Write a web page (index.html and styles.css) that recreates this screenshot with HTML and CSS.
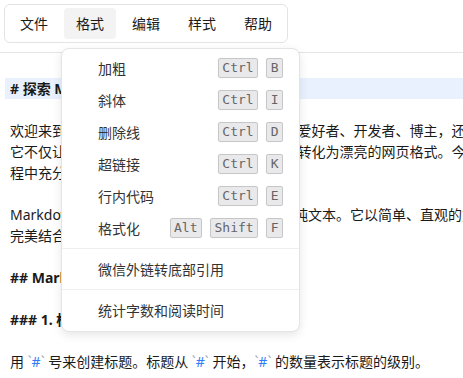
FILE: index.html
```html
<!DOCTYPE html>
<html lang="zh-CN">
<head>
  <meta charset="UTF-8">
  <meta name="viewport" content="width=device-width, initial-scale=1">
  <title>Markdown 编辑器</title>
  <link rel="stylesheet" href="styles.css">
</head>
<body>
  <div class="app">
    <header class="toolbar">
      <nav class="menu-bar">
        <span class="menu-item">文件</span>
        <span class="menu-item active">格式</span>
        <span class="menu-item">编辑</span>
        <span class="menu-item">样式</span>
        <span class="menu-item">帮助</span>
      </nav>
    </header>

    <main class="editor">
      <div class="line bold current"># 探索 Markdown 的奇妙世界</div>
      <div class="line"></div>
      <div class="line">欢迎来到 Markdown 的新世界！无论你是软件爱好者、开发者、博主，还是学生，都能从中受益。</div>
      <div class="line">它不仅让你专注内容，还能将 Markdown 文本转化为漂亮的网页格式。今天，让我们在写作过</div>
      <div class="line">程中充分发挥它的优势。</div>
      <div class="line"></div>
      <div class="line">Markdown 是一种轻量级标记语言，它采用了纯文本。它以简单、直观的方式，将内容与格式</div>
      <div class="line">完美结合在一起。</div>
      <div class="line"></div>
      <div class="line bold">## Markdown 基础语法</div>
      <div class="line"></div>
      <div class="line bold">### 1. 标题</div>
      <div class="line"></div>
      <div class="line">用 <span class="code"><span class="tick">`</span>#<span class="tick">`</span></span> 号来创建标题。标题从 <span class="code"><span class="tick">`</span>#<span class="tick">`</span></span> 开始，<span class="code"><span class="tick">`</span>#<span class="tick">`</span></span> 的数量表示标题的级别。</div>
    </main>

    <div class="dropdown">
      <div class="drop-item"><span>加粗</span><span class="keys"><kbd>Ctrl</kbd><kbd>B</kbd></span></div>
      <div class="drop-item"><span>斜体</span><span class="keys"><kbd>Ctrl</kbd><kbd>I</kbd></span></div>
      <div class="drop-item"><span>删除线</span><span class="keys"><kbd>Ctrl</kbd><kbd>D</kbd></span></div>
      <div class="drop-item"><span>超链接</span><span class="keys"><kbd>Ctrl</kbd><kbd>K</kbd></span></div>
      <div class="drop-item"><span>行内代码</span><span class="keys"><kbd>Ctrl</kbd><kbd>E</kbd></span></div>
      <div class="drop-item"><span>格式化</span><span class="keys"><kbd>Alt</kbd><kbd>Shift</kbd><kbd>F</kbd></span></div>
      <div class="divider"></div>
      <div class="drop-item"><span>微信外链转底部引用</span></div>
      <div class="divider"></div>
      <div class="drop-item"><span>统计字数和阅读时间</span></div>
    </div>
  </div>
</body>
</html>
```

FILE: styles.css
```css
html, body {
  margin: 0;
  padding: 0;
  background: white;
  font-family: "Noto Sans", "Noto Sans CJK SC", sans-serif;
  font-size: 14px;
  color: #1a1a1a;
  overflow: hidden;
}

.app {
  position: relative;
  width: 463px;
  height: 378px;
  overflow: hidden;
}

.toolbar {
  padding: 4px 4px 9px;
  border-bottom: 1px solid #e5e5e5;
}

.menu-bar {
  display: inline-flex;
  gap: 4px;
  padding: 3px;
  border: 1px solid #e3e3e3;
  border-radius: 6px;
}

.menu-item {
  display: flex;
  align-items: center;
  height: 31px;
  padding: 0 12px;
  border-radius: 4px;
  line-height: 1;
}

.menu-item.active {
  background: #f3f3f3;
}

.editor {
  width: 620px;
  padding: 25px 0 0 5px;
}

.line {
  height: 21px;
  line-height: 21px;
  padding-left: 5px;
  white-space: nowrap;
}

.line.bold {
  font-weight: bold;
}

.line.current {
  background: #e8f1fd;
}

.code {
  color: #2f7cf6;
}

.code .tick {
  color: #9aa5b4;
}

.dropdown {
  position: absolute;
  left: 61px;
  top: 48px;
  width: 239px;
  box-sizing: border-box;
  padding: 3px 0 5px;
  background: white;
  border: 1px solid #e4e4e4;
  border-radius: 8px;
  box-shadow: 0 3px 10px rgba(0,0,0,0.1);
}

.drop-item {
  display: flex;
  align-items: center;
  justify-content: space-between;
  height: 32px;
  padding: 0 16px 0 36px;
  color: #333;
}

.divider {
  height: 1px;
  margin: 4px 0;
  background: #eeeeee;
}

.keys {
  display: flex;
  gap: 8px;
}

kbd {
  display: inline-block;
  height: 18px;
  line-height: 18px;
  padding: 0 3.5px;
  background: #e9e9eb;
  border: 1px solid #c6c6c6;
  border-radius: 2px;
  font-family: "DejaVu Sans Mono", monospace;
  font-size: 13px;
  color: #666;
}
```
